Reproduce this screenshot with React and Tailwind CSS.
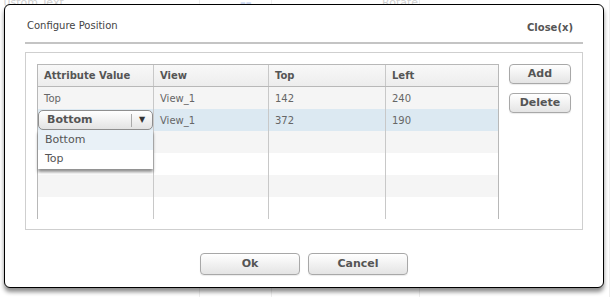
import React from 'react';

const rows = [
    { attr: 'Top', view: 'View_1', top: '142', left: '240' },
    { attr: 'Bottom', view: 'View_1', top: '372', left: '190', selected: true },
    {}, {}, {}, {},
];

const cols = ['Attribute Value', 'View', 'Top', 'Left'];

const Btn = ({ children, className = '' }) => (
    <button className={`flex items-center justify-center rounded-[4px] border border-[#a8a8a8] bg-gradient-to-b from-white to-[#e4e4e4] text-[11px] font-bold text-[#555] shadow-[0_1px_1px_rgba(0,0,0,0.08)] ${className}`}>
        {children}
    </button>
);

const SelectCell = () => (
    <div className="relative h-full">
        <div className="mt-[1px] flex h-[20px] items-center rounded-[5px] border border-[#8f8f8f] bg-gradient-to-b from-white to-[#e3e3e3] pl-[8px] text-[11px] font-bold text-[#555]">
            <span className="flex-1">Bottom</span>
            <span className="h-[13px] border-l border-[#aaa]" />
            <span className="flex w-[20px] justify-center text-[8px] text-[#333]">▼</span>
        </div>
        {/* open list */}
        <div className="absolute left-0 top-[21px] z-10 w-full bg-white text-[11px] text-[#555] shadow-[0_3px_3px_rgba(0,0,0,0.45)]">
            <div className="flex h-[20px] items-center bg-[#e9f1f7] pl-[7px]">Bottom</div>
            <div className="flex h-[19px] items-center pl-[7px]">Top</div>
        </div>
    </div>
);

export default function App() {
    return (
        <div className="relative h-[297px] w-[610px] overflow-hidden bg-white font-['DejaVu_Sans','Liberation_Sans',sans-serif]">
            {/* page behind the dialog */}
            <div className="flex h-full text-[11px] text-[#d0d0d0]">
                <div className="w-[200px] border-r border-[#eee] leading-[6px]">&nbsp;ustom Text</div>
                <div className="w-[40px]" />
                <div className="w-[32px] border-r border-[#eee] text-[6px] leading-[6px] text-[#c8d4ee]">▬▬</div>
                <div className="w-[148px] border-r border-[#eee] pl-[110px] leading-[6px]">Rotate</div>
                <div className="flex-1 border-r border-[#eee]" />
            </div>

            <div className="absolute left-[4px] top-[4px] flex h-[284px] w-[600px] flex-col rounded-[6px] border-[1.5px] border-black bg-white shadow-[0_4px_4px_rgba(0,0,0,0.45)]">
                <div className="mx-[20px] flex h-[39px] items-end justify-between border-b-2 border-[#c4c4c4] pb-[9px]">
                    <span className="pl-[2px] text-[10px] text-[#444]">Configure Position</span>
                    <span className="pr-[10px] text-[10px] font-bold text-[#555]" style={{ transform: 'translateY(2px)' }}>Close(x)</span>
                </div>

                <div className="mx-[20px] mt-[8px] flex h-[178px] gap-[10px] border border-[#cfcfcf] px-[11px] pt-[11px]">
                    <div className="h-[155px] w-[463px] border border-[#b8b8b8]">
                        <div className="grid h-[22px] grid-cols-[115px_115px_117px_1fr] border-b border-[#b8b8b8] bg-gradient-to-b from-[#f8f8f8] to-[#ededed] text-[10px] font-bold text-[#555]">
                            {cols.map((c, i) => (
                                <div key={c} className={`flex items-center pl-[6px] ${i > 0 ? 'border-l border-[#c8c8c8]' : ''}`}>{c}</div>
                            ))}
                        </div>
                        {rows.map((r, ri) => (
                            <div
                                key={ri}
                                className={`grid h-[22px] grid-cols-[115px_115px_117px_1fr] text-[10px] text-[#666] ${r.selected ? 'bg-[#dce9f2]' : ri % 2 === 0 ? 'bg-[#f5f5f5]' : 'bg-white'}`}
                            >
                                {r.selected ? <SelectCell /> : <div className="flex items-center pl-[6px]">{r.attr}</div>}
                                <div className="flex items-center border-l border-[#c8c8c8] pl-[6px]">{r.view}</div>
                                <div className="flex items-center border-l border-[#c8c8c8] pl-[6px]">{r.top}</div>
                                <div className="flex items-center border-l border-[#c8c8c8] pl-[6px]">{r.left}</div>
                            </div>
                        ))}
                    </div>
                    <div className="flex flex-col gap-[9px]">
                        <Btn className="h-[20px] w-[62px]">Add</Btn>
                        <Btn className="h-[20px] w-[62px]">Delete</Btn>
                    </div>
                </div>

                <div className="mt-[23px] flex justify-center gap-[8px]">
                    <Btn className="h-[22px] w-[100px]">Ok</Btn>
                    <Btn className="h-[22px] w-[100px]">Cancel</Btn>
                </div>
            </div>
        </div>
    );
}
